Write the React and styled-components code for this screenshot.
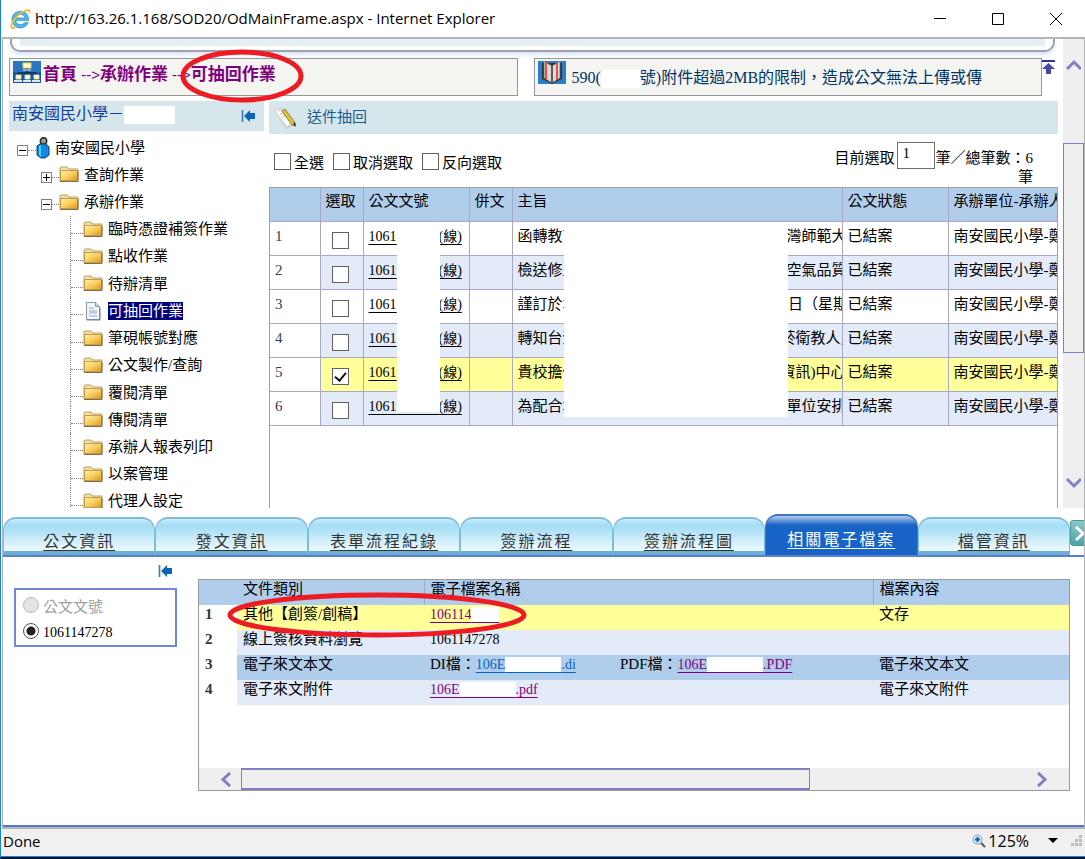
import React, { useState } from "react";
import styled, { createGlobalStyle } from "styled-components";

const GlobalStyle = createGlobalStyle`
  * {
    box-sizing: border-box;
  }
  body {
    margin: 0;
    background: #fff;
    color: #000;
    font: 15px/20px "Liberation Serif", "Noto Sans CJK TC", serif;
  }
  button, input {
    font: inherit;
  }
  svg {
    flex: none;
  }
`;

const Window = styled.div`
  display: flex;
  flex-direction: column;
  min-height: 100vh;
  border-left: 1px solid #1883d7;
  border-bottom: 2px solid #06101f;
  overflow: hidden;
`;

const TitleBar = styled.header`
  display: flex;
  align-items: center;
  height: 37px;
  padding-left: 8px;
  font: 15px/20px "Open Sans", "Noto Sans", sans-serif;
`;

const TitleText = styled.h1`
  flex: 1;
  margin: 0 0 2px 4px;
  font: inherit;
  white-space: nowrap;
`;

const WindowButton = styled.button`
  display: flex;
  align-items: center;
  justify-content: center;
  width: 58px;
  height: 36px;
  padding: 0;
  border: 0;
  background: none;
`;

const Client = styled.div`
  flex: 1;
  display: flex;
  flex-direction: column;
  margin-left: 1px;
  border: 1px solid #b4b4b4;
  border-top-width: 2px;
  border-bottom-width: 2px;
`;

const Upper = styled.div`
  display: flex;
  height: 469px;
`;

const UpperPage = styled.div`
  flex: 1;
  min-width: 0;
  display: flex;
  flex-direction: column;
`;

const BannerEdge = styled.div`
  height: 13px;
  margin: 0 4px 0 7px;
  border: 2px solid #a0a0b0;
  border-top: 0;
  border-radius: 0 0 10px 10px;
  box-shadow: 0 3px 4px #dbe4f5;

  &::before {
    content: "";
    display: block;
    height: 7px;
    margin: 0 8px;
    background: #e6eff6;
  }
`;

const InfoRow = styled.div`
  display: flex;
  margin: 6px 4px 0 6px;
`;

const InfoBox = styled.div`
  position: relative;
  flex: 1;
  display: flex;
  align-items: flex-start;
  height: 38px;
  padding: 2px 3px;
  border: 1px solid #97979b;
  background: #f4f5f1;
  white-space: nowrap;

  & + & {
    margin-left: 16px;
  }
`;

const Crumbs = styled.nav`
  margin: 4px 0 0 2px;
  font: bold 17px/20px "Liberation Sans", "Noto Sans CJK TC", sans-serif;

  a {
    color: #800080;
    text-decoration: none;
  }
`;

const CrumbArrow = styled.span`
  color: #800080;
  font-size: 15px;
  font-weight: normal;
`;

const Marquee = styled.div`
  margin: 7px 0 0 6px;
  color: #003366;
  font-size: 16px;
`;

const Redacted = styled.span`
  display: inline-block;
  width: ${(p) => p.$width}px;
  height: 18px;
  background: #fff;
  vertical-align: middle;
`;

const IconButton = styled.button`
  display: flex;
  padding: 0;
  border: 0;
  background: none;
`;

const Columns = styled.div`
  flex: 1;
  display: flex;
  gap: 5px;
  margin-top: 5px;
  min-height: 0;
`;

const Sidebar = styled.aside`
  width: 261px;
  flex: none;
  overflow: hidden;
`;

const Bar = styled.div`
  display: flex;
  align-items: center;
  height: ${(p) => p.$height}px;
  background: #d7e6ea;
`;

const SchoolName = styled.div`
  flex: 1;
  margin: 0 0 4px 3px;
  color: #1040a0;
  font-size: 16px;
`;

const SidebarBar = styled(Bar)`
  margin-left: 6px;
  padding-right: 9px;
`;

const Tree = styled.ul`
  display: flex;
  flex-direction: column;
  height: 384px;
  margin: 0;
  padding: 3px 0 0 14px;
  list-style: none;
`;

const TreeRow = styled.li`
  flex: 1;
  display: flex;
  align-items: center;
  padding-left: ${(p) => [0, 24, 53][p.$depth]}px;
`;

const Toggle = styled.button`
  display: flex;
  align-items: center;
  justify-content: center;
  width: 11px;
  height: 11px;
  margin: 5px 0 0;
  padding: 0;
  border: 1px solid #808080;
  background: #fff;
`;

const Dots = styled.span`
  width: ${(p) => p.$width}px;
  margin-top: 5px;
  border-top: 1px dotted #808080;
`;

const Branch = styled.span`
  align-self: stretch;
  width: 13px;
  border-left: 1px dotted #808080;

  &::after {
    content: "";
    display: block;
    height: 17px;
    border-bottom: 1px dotted #808080;
  }
`;

const TreeLink = styled.a`
  margin-left: 5px;
  line-height: 18px;
  color: ${(p) => (p.$active ? "#fff" : "#000")};
  background: ${(p) => (p.$active ? "#00007f" : "none")};
  text-decoration: none;
`;

const Main = styled.main`
  flex: 1;
  min-width: 0;
  display: flex;
  flex-direction: column;
  margin-right: 1px;
`;

const MainBar = styled(Bar)`
  gap: 10px;
  padding: 0 0 2px 4px;
  color: #1a5c92;
`;

const Tools = styled.div`
  display: flex;
  justify-content: space-between;
  height: 53px;
  padding: 8px 25px 0 5px;
`;

const Checks = styled.div`
  display: flex;
  gap: 9px;
  padding-top: 9px;
`;

const CheckLabel = styled.label`
  display: flex;
  align-items: flex-start;
  gap: 3px;
  line-height: 24px;
`;

const CheckBox = styled.input.attrs({ type: "checkbox" })`
  appearance: none;
  display: grid;
  place-items: center;
  width: 17px;
  height: 17px;
  margin: 2px 0 0;
  border: 1px solid #606060;
  background: #fff;

  &:checked::after {
    content: "";
    width: 5px;
    height: 9px;
    margin-bottom: 2px;
    border: solid #111;
    border-width: 0 2px 2px 0;
    transform: rotate(40deg);
  }
`;

const Counter = styled.div`
  line-height: 18px;
  text-align: right;
`;

const CounterLine = styled.div`
  display: flex;
  align-items: center;
  height: 26px;
  padding-top: 5px;
`;

const CountInput = styled.input`
  width: 38px;
  height: 27px;
  margin: 0 0 5px 3px;
  padding: 0 4px 3px;
  border: 1px solid #707070;
`;

const ListFrame = styled.div`
  position: relative;
  flex: 1;
  overflow: hidden;
  border: 1px solid #a0a0a0;
  border-bottom: 0;
`;

const DocTable = styled.table`
  width: 100%;
  table-layout: fixed;
  border-collapse: collapse;

  th, td {
    height: 34px;
    padding: 0 0 4px 5px;
    border-right: 1px solid #a8a8c6;
    border-bottom: 1px solid #a8a8c6;
    font-weight: normal;
    text-align: left;
    white-space: nowrap;
    overflow: hidden;
  }
  th {
    height: 33px;
    padding-bottom: 6px;
    background: #b0cdeb;
  }
  th:last-child, td:last-child {
    border-right: 0;
  }
`;

const DocRow = styled.tr`
  background: ${(p) => (p.$picked ? "#ffff99" : p.$shaded ? "#e3eaf8" : "#fff")};

  td:first-child {
    background: #fff;
    color: #404040;
  }
  td:nth-child(2) {
    padding: 3px 0 0 11px;
  }
`;

const DocLink = styled.a`
  color: #000;
  font-size: 14px;
  text-underline-offset: 3px;
`;

const Subject = styled.div`
  display: flex;

  span:first-child {
    flex: none;
    width: ${(p) => (p.$wide ? 269 : 263)}px;
  }
`;

/* blanked-out strips lying over the list */
const Cover = styled.div`
  position: absolute;
  top: 34px;
  left: ${(p) => p.$left}px;
  width: ${(p) => p.$width}px;
  height: ${(p) => p.$height}px;
  background: #fff;
`;

const VScroll = styled.div`
  display: flex;
  flex-direction: column;
  align-items: center;
  width: 21px;
  margin-left: 4px;
  padding: 20px 0 18px;
  background: #efefef;
`;

const VThumb = styled.div`
  width: 21px;
  height: 210px;
  margin: 69px 0 auto;
  border: 1px solid #8080c8;
`;

const Tabs = styled.nav`
  display: flex;
  align-items: flex-end;
  height: 49px;
  padding-top: 5px;
  border-bottom: 2px solid #5b7dd2;
`;

const Tab = styled.a`
  flex: 1;
  height: ${(p) => (p.$active ? 41 : 38)}px;
  padding-top: ${(p) => (p.$active ? 14 : 13)}px;
  border: 1px solid ${(p) => (p.$active ? "#3d78c0" : "#7fbcd6")};
  border-width: 2px 1px 0;
  border-bottom: ${(p) => (p.$active ? "0" : "4px solid #69b0d3")};
  border-radius: 13px 13px 0 0;
  background: ${(p) =>
    p.$active
      ? "linear-gradient(#b8cdf0 0, #1763c6 9px)"
      : "linear-gradient(#c9eefa 0, #a9dff6 5px, #a9dff6 9px, #effafd)"};
  color: ${(p) => (p.$active ? "#fff" : "#333")};
  font-size: 16px;
  line-height: 20px;
  letter-spacing: 2px;
  text-align: center;
  text-underline-offset: 3px;
  white-space: nowrap;
`;

const NextTab = styled.button`
  align-self: center;
  display: flex;
  align-items: center;
  width: 14px;
  height: 26px;
  margin-bottom: 2px;
  padding: 0 0 0 1px;
  border: 1px solid #3f9a9a;
  border-right: 0;
  border-radius: 4px 0 0 4px;
  background: linear-gradient(#8bc8c6, #4ba5a5);
  overflow: hidden;
`;

const Lower = styled.section`
  flex: 1;
  display: flex;
  gap: 21px;
  padding: 7px 14px 33px 11px;
  border-bottom: 2px solid #5576d4;
`;

const Picker = styled.div`
  width: 163px;
  flex: none;
`;

const PickerTop = styled.div`
  display: flex;
  justify-content: flex-end;
  height: 24px;
  padding-right: 5px;
`;

const PickerBox = styled.fieldset`
  height: 59px;
  margin: 0;
  padding: 3px 7px;
  border: 2px solid #6f86e8;
`;

const RadioLabel = styled.label`
  display: flex;
  align-items: flex-start;
  gap: 4px;
  height: 26px;
  padding-top: 4px;
  color: ${(p) => (p.$off ? "#a0a0a0" : "#000")};
  font-size: ${(p) => (p.$off ? 15 : 14)}px;
`;

const Radio = styled.input.attrs({ type: "radio" })`
  appearance: none;
  width: 16px;
  height: 16px;
  margin: 0;
  border: 1px solid #505050;
  border-radius: 50%;
  background: #fff;

  &:checked {
    background: radial-gradient(circle, #222 4px, #fff 5px);
  }
  &:disabled {
    border-color: #b8b8b8;
    background: #e4e4e4;
  }
`;

const FilesFrame = styled.div`
  position: relative;
  flex: 1;
  min-width: 0;
  display: flex;
  flex-direction: column;
  height: 212px;
  margin-top: 15px;
  border: 1px solid #9a9a9a;
`;

const FileTable = styled.table`
  width: 100%;
  table-layout: fixed;
  border-collapse: collapse;

  th, td {
    height: 25px;
    padding: 0 0 5px 6px;
    font-weight: normal;
    line-height: 18px;
    text-align: left;
    vertical-align: top;
    white-space: nowrap;
  }
  thead {
    background: #b0cdeb;
  }
  thead th + th + th {
    border-left: 1px solid #a8a8c6;
  }
  tbody th {
    background: #fff;
    color: #333;
    font-weight: bold;
  }
`;

const FileRow = styled.tr`
  background: ${(p) => p.$color};
`;

const FileLink = styled.a`
  color: ${(p) => (p.$fresh ? "#0563c1" : "#800080")};
  font-size: 14px;
  text-underline-offset: 3px;
`;

const FileNumber = styled.span`
  font-size: 14px;
`;

const Blank = styled.span`
  background: #fff;
`;

const FileGroup = styled.span`
  display: inline-block;
  width: 190px;
`;

const HScroll = styled.div`
  display: flex;
  align-items: center;
  height: 22px;
  margin-top: auto;
  padding: 0 20px;
  background: #efefef;
`;

const HThumb = styled.div`
  width: 569px;
  height: 22px;
  margin: 0 auto 0 7px;
  border: 2px solid #8080c0;
  border-width: 2px 1px;
`;

const Status = styled.footer`
  display: flex;
  align-items: center;
  height: 28px;
  padding: 0 2px 3px;
  border-bottom: 1px solid #1883d7;
  background: #f0f0f0;
  font: 15px/20px "Open Sans", "Noto Sans", sans-serif;
`;

const Zoom = styled.button`
  display: flex;
  align-items: center;
  gap: 2px;
  margin-left: auto;
  padding: 0;
  border: 0;
  background: none;
  font-size: 16px;
`;

const Ring = styled.svg`
  position: absolute;
  top: ${(p) => p.$top}px;
  left: ${(p) => p.$left}px;
  z-index: 2;
  pointer-events: none;
  fill: none;
  stroke: #ed1c24;
  stroke-width: 5;
`;

const RedRing = ({ width, height, top, left }) => (
  <Ring width={width} height={height} $top={top} $left={left}>
    <ellipse cx={width / 2} cy={height / 2} rx={width / 2 - 3} ry={height / 2 - 3} />
  </Ring>
);

const BrowserIcon = () => (
  <svg width="22" height="22" viewBox="0 0 22 22">
    <path
      d="M19.500 12.600H6.700c.3 2.600 2.200 4 4.900 4 1.800 0 3.300-.8 4.100-2h3.500c-1.200 3.400-4 5.400-7.700 5.400-5.100 0-8.600-3.300-8.600-8.300s3.600-8.500 8.600-8.500c5.200 0 8.400 3.700 8 9.400zM15.900 9.900c-.4-2.200-2-3.500-4.500-3.500s-4.200 1.300-4.700 3.500z"
      fill="#4cb8ea"
      stroke="#1d7fc0"
      strokeWidth=".6"
    />
    <path
      d="M3 21c-3.500-1.500-.500-9 5-13.800C13 2.800 19 .3 20.800 1.800c1.300 1.100.700 3.300-.500 5.200.500-2 .400-3.300-.7-3.600-2.600-.7-7.300 2-11.200 5.800C4.500 13 2 18.300 3.800 19c1 .4 2.700-.3 4.400-1.300C6 20.300 4.200 21.500 3 21z"
      fill="#f2b92d"
    />
  </svg>
);

const SiteIcon = () => (
  <svg width="28" height="22" viewBox="0 0 28 22">
    <path d="M0 0h28v22H0z" fill="#1558a8" />
    <path d="M0 0h28v11H0z" fill="#2a74c4" />
    <path d="M14 7v8M5 16v-4h18v4" stroke="#101820" strokeWidth="1" fill="none" />
    <path d="M10 2h8v5h-8z" fill="#fffbe0" stroke="#f0d838" />
    <path d="M10 9h8" stroke="#e8e8e8" />
    <path d="M3 14h5v4H3zM12 14h5v4h-5zM21 14h5v4h-5z" fill="#fff" stroke="#e6d870" />
    <path d="M1 20h8M10 20h8M19 20h8" stroke="#dfe6ee" strokeWidth="2" />
  </svg>
);

const BookIcon = () => (
  <svg width="28" height="23" viewBox="0 0 28 23">
    <path d="M0 0h28v23H0z" fill="#2a7fcb" />
    <path d="M4 2v16l10 5 10-5V2z" fill="#333" />
    <path d="M6 0l8 5v17l-8-5zM22 0l-8 5v17l8-5z" fill="#dcdad2" stroke="#666" strokeWidth=".7" />
    <path d="M8 1v17M19 2v17" stroke="#e03030" strokeWidth="1.600" />
    <path d="M14 5v17" stroke="#444" strokeWidth="1.400" />
  </svg>
);

const CollapseIcon = () => (
  <svg width="14" height="14" viewBox="0 0 14 14">
    <path d="M1.500 1v12" stroke="#3a78b8" strokeWidth="1.600" />
    <path d="M3 7l6-6v3h5v6H9v3z" fill="#0b66b5" />
  </svg>
);

const TopIcon = () => (
  <svg width="13" height="16" viewBox="0 0 13 16">
    <path d="M0 2h13v2H0z" fill="#33339c" />
    <path d="M6.500 5L13 11H9v5H4v-5H0z" fill="#4646ac" />
  </svg>
);

const NoteIcon = () => (
  <svg width="24" height="24" viewBox="0 0 24 24">
    <path d="M1 5l8-2 12 14-7 5z" fill="#fbfbf8" stroke="#c9c9c4" />
    <path d="M1 6l12 17 9-5v1l-9 5z" fill="#c4c3be" />
    <path d="M5 6l4-1M7 9l4-1M9 12l4-2" stroke="#b9bbc0" />
    <path d="M9 6l3-2 10 14v3l-3-1z" fill="#e5c535" stroke="#6d6633" strokeWidth=".8" />
    <path d="M20 19l3 3-1-5z" fill="#333" />
  </svg>
);

const PersonIcon = () => (
  <svg width="14" height="22" viewBox="0 0 14 22">
    <circle cx="7.500" cy="4" r="3.200" fill="#999" stroke="#222" strokeWidth="1.400" />
    <path d="M1 9l3-2h6l3 3v8l-4 3H5l-4-3z" fill="#1688dd" stroke="#0a3c78" />
    <path d="M3 9l2-1v12l-2-2z" fill="#38d8ff" />
  </svg>
);

const FolderIcon = () => (
  <svg width="20" height="17" viewBox="0 0 20 17">
    <defs>
      <linearGradient id="folder" x2="1" y2="1">
        <stop offset="0" stopColor="#fff2a8" />
        <stop offset=".55" stopColor="#f5cb59" />
        <stop offset="1" stopColor="#dd911c" />
      </linearGradient>
    </defs>
    <path d="M1 4V2l1-1h6l2 2h9v12H1z" fill="#f1dfa0" stroke="#b8a070" />
    <path d="M1.500 4.500h17v10h-17z" fill="url(#folder)" stroke="#c79a48" />
    <path d="M1 15.500h18V5" stroke="#7f6b4c" fill="none" />
  </svg>
);

const PageIcon = () => (
  <svg width="20" height="20" viewBox="0 0 20 20">
    <path d="M3.500 1.500h9l4 4v13h-13z" fill="#f4f8fd" stroke="#8296b6" />
    <path d="M12.500 1.500v4h4" fill="#c8d8ee" stroke="#8296b6" />
    <path d="M6 7h5M6 10h8M6 12h8M6 15h8" stroke="#8fa6c8" />
    <path d="M4 19h13V7" stroke="#6e7d99" fill="none" />
  </svg>
);

const chevrons = {
  up: "M1 10L8 3l7 7",
  down: "M1 4l7 7 7-7",
  left: "M11 1L4 7.500l7 6.500",
  right: "M4 1l7 6.500L4 14",
};

const Chevron = ({ dir, color = "#8080c0" }) => (
  <svg width="15" height="15" viewBox="0 0 15 15">
    <path d={chevrons[dir]} fill="none" stroke={color} strokeWidth="3" />
  </svg>
);

const folders = [
  "臨時憑證補簽作業",
  "點收作業",
  "待辦清單",
  "可抽回作業",
  "筆硯帳號對應",
  "公文製作/查詢",
  "覆閱清單",
  "傳閱清單",
  "承辦人報表列印",
  "以案管理",
  "代理人設定",
];

const docs = [
  { start: "函轉教育", end: "灣師範大", wide: true },
  { start: "檢送修正", end: "空氣品質", wide: true },
  { start: "謹訂於本", end: "5日（星期" },
  { start: "轉知台灣", end: "菸衛教人員" },
  { start: "貴校擔任", end: "資訊)中心" },
  { start: "為配合本", end: "單位安排", wide: true },
];

const tabs = [
  "公文資訊",
  "發文資訊",
  "表單流程紀錄",
  "簽辦流程",
  "簽辦流程圖",
  "相關電子檔案",
  "檔管資訊",
];

const gap = (n) => "\u00a0".repeat(n);

const FolderTree = () => (
  <Tree>
    <TreeRow $depth={0}>
      <Toggle aria-label="收合">
        <svg width="7" height="7"><path d="M0 3.500h7" stroke="#000" /></svg>
      </Toggle>
      <Dots $width={8} />
      <PersonIcon />
      <TreeLink href="#school">南安國民小學</TreeLink>
    </TreeRow>
    <TreeRow $depth={1}>
      <Toggle aria-label="展開">
        <svg width="7" height="7"><path d="M0 3.500h7M3.500 0v7" stroke="#000" /></svg>
      </Toggle>
      <Dots $width={7} />
      <FolderIcon />
      <TreeLink href="#query">查詢作業</TreeLink>
    </TreeRow>
    <TreeRow $depth={1}>
      <Toggle aria-label="收合">
        <svg width="7" height="7"><path d="M0 3.500h7" stroke="#000" /></svg>
      </Toggle>
      <Dots $width={7} />
      <FolderIcon />
      <TreeLink href="#handle">承辦作業</TreeLink>
    </TreeRow>
    {folders.map((name) => {
      const active = name === "可抽回作業";
      return (
        <TreeRow key={name} $depth={2}>
          <Branch />
          {active ? <PageIcon /> : <FolderIcon />}
          <TreeLink href="#folder" $active={active}>{name}</TreeLink>
        </TreeRow>
      );
    })}
  </Tree>
);

const DocList = () => (
  <ListFrame>
    <DocTable>
      <colgroup>
        <col width="50" />
        <col width="43" />
        <col width="106" />
        <col width="43" />
        <col width="330" />
        <col width="106" />
        <col />
      </colgroup>
      <thead>
        <tr>
          <th />
          <th>選取</th>
          <th>公文文號</th>
          <th>併文</th>
          <th>主旨</th>
          <th>公文狀態</th>
          <th>承辦單位-承辦人</th>
        </tr>
      </thead>
      <tbody>
        {docs.map(({ start, end, wide }, i) => (
          <DocRow key={start} $picked={i === 4} $shaded={i % 2 === 1}>
            <td>{i + 1}</td>
            <td><CheckBox aria-label={`選取 ${i + 1}`} defaultChecked={i === 4} /></td>
            <td><DocLink href="#doc">1061{gap(12)}(線)</DocLink></td>
            <td />
            <td>
              <Subject $wide={wide}>
                <span>{start}</span>
                <span>{end}</span>
              </Subject>
            </td>
            <td>已結案</td>
            <td>南安國民小學-鄭</td>
          </DocRow>
        ))}
      </tbody>
    </DocTable>
    <Cover $left={127} $width={43} $height={190} />
    <Cover $left={294} $width={224} $height={195} />
  </ListFrame>
);

const Files = () => (
  <FilesFrame>
    <FileTable>
      <colgroup>
        <col width="38" />
        <col width="187" />
        <col width="449" />
        <col />
      </colgroup>
      <thead>
        <tr>
          <th />
          <th>文件類別</th>
          <th>電子檔案名稱</th>
          <th>檔案內容</th>
        </tr>
      </thead>
      <tbody>
        <FileRow $color="#ffff99">
          <th>1</th>
          <td>其他【創簽/創稿】</td>
          <td><FileLink href="#f1">106114<Blank>{gap(8)}</Blank></FileLink></td>
          <td>文存</td>
        </FileRow>
        <FileRow $color="#e3eaf8">
          <th>2</th>
          <td>線上簽核資料瀏覽</td>
          <td><FileNumber>1061147278</FileNumber></td>
          <td />
        </FileRow>
        <FileRow $color="#b0cdeb">
          <th>3</th>
          <td>電子來文本文</td>
          <td>
            <FileGroup>
              DI檔：<FileLink href="#f3" $fresh>106E<Blank>{gap(16)}</Blank>.di</FileLink>
            </FileGroup>
            PDF檔：<FileLink href="#f4">106E<Blank>{gap(16)}</Blank>.PDF</FileLink>
          </td>
          <td>電子來文本文</td>
        </FileRow>
        <FileRow $color="#e3eaf8">
          <th>4</th>
          <td>電子來文附件</td>
          <td><FileLink href="#f5">106E<Blank>{gap(16)}</Blank>.pdf</FileLink></td>
          <td>電子來文附件</td>
        </FileRow>
      </tbody>
    </FileTable>
    <HScroll>
      <Chevron dir="left" />
      <HThumb />
      <Chevron dir="right" />
    </HScroll>
    <RedRing width={300} height={46} top={12} left={28} />
  </FilesFrame>
);

export default function App() {
  const [activeTab, setActiveTab] = useState("相關電子檔案");

  return (
    <Window>
      <GlobalStyle />
      <TitleBar>
        <BrowserIcon />
        <TitleText>http://163.26.1.168/SOD20/OdMainFrame.aspx - Internet Explorer</TitleText>
        <WindowButton aria-label="Minimize">
          <svg width="12" height="12"><path d="M0 5.500h12" stroke="#000" /></svg>
        </WindowButton>
        <WindowButton aria-label="Maximize">
          <svg width="12" height="12"><path d="M.5.5h11v11H.5z" fill="none" stroke="#000" /></svg>
        </WindowButton>
        <WindowButton aria-label="Close">
          <svg width="12" height="12"><path d="M0 0l12 12M12 0L0 12" stroke="#000" /></svg>
        </WindowButton>
      </TitleBar>

      <Client>
        <Upper>
          <UpperPage>
            <BannerEdge />
            <InfoRow>
              <InfoBox>
                <SiteIcon />
                <Crumbs>
                  <a href="#home">首頁</a>
                  <CrumbArrow> --&gt;</CrumbArrow>
                  <a href="#handle">承辦作業</a>
                  <CrumbArrow> --&gt;</CrumbArrow>
                  <a href="#withdraw">可抽回作業</a>
                </Crumbs>
                <RedRing width={124} height={54} top={-10} left={170} />
              </InfoBox>
              <InfoBox>
                <BookIcon />
                <Marquee>
                  590(<Redacted $width={39} />號)附件超過2MB的限制，造成公文無法上傳或傳
                </Marquee>
              </InfoBox>
              <IconButton aria-label="回頂端"><TopIcon /></IconButton>
            </InfoRow>

            <Columns>
              <Sidebar>
                <SidebarBar $height={30}>
                  <SchoolName>南安國民小學－<Redacted $width={51} /></SchoolName>
                  <IconButton aria-label="收合選單"><CollapseIcon /></IconButton>
                </SidebarBar>
                <FolderTree />
              </Sidebar>
              <Main>
                <MainBar $height={33}>
                  <NoteIcon />
                  送件抽回
                </MainBar>
                <Tools>
                  <Checks>
                    <CheckLabel><CheckBox />全選</CheckLabel>
                    <CheckLabel><CheckBox />取消選取</CheckLabel>
                    <CheckLabel><CheckBox />反向選取</CheckLabel>
                  </Checks>
                  <Counter>
                    <CounterLine>
                      <label htmlFor="count">目前選取</label>
                      <CountInput id="count" defaultValue="1" />
                      筆／總筆數：6
                    </CounterLine>
                    筆
                  </Counter>
                </Tools>
                <DocList />
              </Main>
            </Columns>
          </UpperPage>
          <VScroll>
            <Chevron dir="up" />
            <VThumb />
            <Chevron dir="down" />
          </VScroll>
        </Upper>

        <Tabs>
          {tabs.map((name) => (
            <Tab
              key={name}
              href="#tab"
              $active={name === activeTab}
              onClick={() => setActiveTab(name)}
            >
              {name}
            </Tab>
          ))}
          <NextTab aria-label="下一頁"><Chevron dir="right" color="#fff" /></NextTab>
        </Tabs>

        <Lower>
          <Picker>
            <PickerTop>
              <IconButton aria-label="收合"><CollapseIcon /></IconButton>
            </PickerTop>
            <PickerBox>
              <RadioLabel $off><Radio name="doc" disabled />公文文號</RadioLabel>
              <RadioLabel><Radio name="doc" defaultChecked />1061147278</RadioLabel>
            </PickerBox>
          </Picker>
          <Files />
        </Lower>
      </Client>

      <Status>
        Done
        <Zoom>
          <svg width="14" height="14" viewBox="0 0 14 14">
            <path d="M9 9l4 4" stroke="#555" strokeWidth="2" />
            <circle cx="5.500" cy="5.500" r="4.500" fill="#d8ecfb" stroke="#7f9db9" />
            <path d="M5.500 3v5M3 5.500h5" stroke="#0b62b5" strokeWidth="2" />
          </svg>
          125%
          <svg width="40" height="10"><path d="M17 2h10l-5 5z" fill="#000" /></svg>
        </Zoom>
        <svg width="12" height="12">
          <path d="M8 0h3v3H8zM4 4h3v3H4zM8 4h3v3H8zM0 8h3v3H0zM4 8h3v3H4zM8 8h3v3H8z" fill="#bbb" />
        </svg>
      </Status>
    </Window>
  );
}
